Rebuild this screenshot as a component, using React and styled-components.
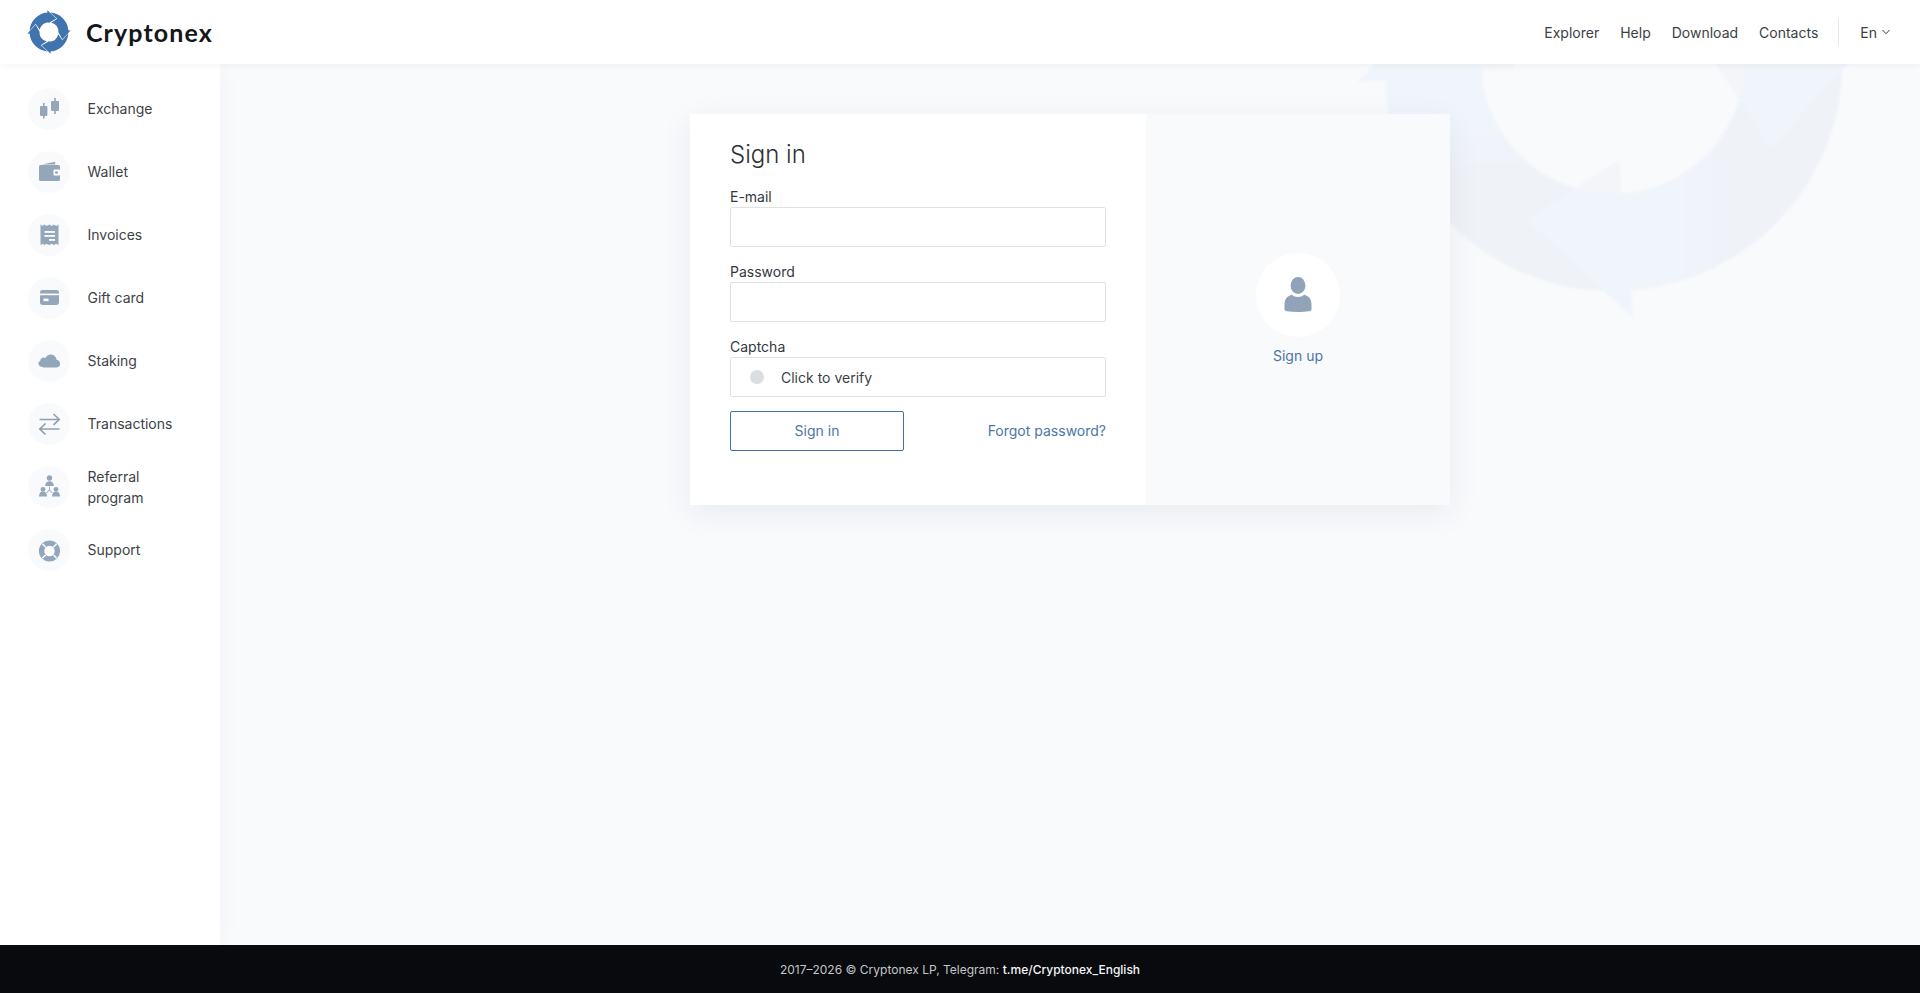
import React from "react";
import styled, { createGlobalStyle } from "styled-components";

const Global = createGlobalStyle`
  html, body { margin: 0; padding: 0; height: 100%; }
  body { font-family: Inter, "Liberation Sans", sans-serif; font-size: 14px; color: #33383e; background: #f8fafc; overflow: hidden; }
  * { box-sizing: border-box; }
  a { text-decoration: none; color: inherit; }
`;

const Page = styled.div`
  display: flex;
  flex-direction: column;
  height: 100vh;
`;
const Header = styled.header`
  position: relative;
  z-index: 3;
  flex: 0 0 64px;
  display: flex;
  align-items: center;
  justify-content: space-between;
  padding: 0 29px 0 26px;
  background: #fff;
  box-shadow: 0 0 8px rgba(40, 50, 70, 0.07);
`;
const Brand = styled.a`
  display: flex;
  align-items: center;
  gap: 14px;
`;
const BrandName = styled.span`
  font-family: "Lato", sans-serif;
  font-weight: 700;
  font-size: 25px;
  letter-spacing: 1.1px;
  color: #14161a;
`;
const TopNav = styled.nav`
  display: flex;
  align-items: center;
`;
const TopLink = styled.a`
  margin-right: 21px;
  line-height: 21px;
  color: #3a3f45;
`;
const Divider = styled.span`
  width: 1px;
  height: 28px;
  margin: 0 21px 0 -1px;
  background: #e4e6e9;
`;
const Lang = styled.span`
  display: flex;
  align-items: center;
  gap: 4px;
  color: #3a3f45;
`;
const Body = styled.div`
  flex: 1;
  display: flex;
  min-height: 0;
`;
const Sidebar = styled.aside`
  position: relative;
  z-index: 2;
  flex: 0 0 220px;
  display: flex;
  flex-direction: column;
  gap: 21px;
  padding: 24px 0 0 28px;
  background: #fff;
  box-shadow: 0 0 22px rgba(40, 60, 90, 0.035);
`;
const NavItem = styled.a`
  display: flex;
  align-items: center;
  gap: 17.5px;
  min-height: 42px;
  line-height: 21px;
  color: #3d4248;
`;
const NavIcon = styled.span`
  flex: 0 0 42px;
  width: 42px;
  height: 42px;
  border-radius: 50%;
  background: #f8fafc;
  svg { display: block; }
`;
const NavLabel = styled.span`
  max-width: 80px;
  position: relative;
  top: -0.5px;
`;
const Main = styled.main`
  position: relative;
  flex: 1;
  display: flex;
  justify-content: center;
  align-items: flex-start;
  padding-top: 50px;
  overflow: hidden;
  background: #f8fafc;
`;
const Watermark = styled.svg`
  position: absolute;
  left: 1123px;
  top: -272px;
  width: 540px;
  height: 540px;
  filter: blur(1px);
`;
const Card = styled.section`
  position: relative;
  display: flex;
  width: 760px;
  background: #fff;
  box-shadow: 0 8px 30px rgba(45, 60, 85, 0.07);
`;
const FormPane = styled.form`
  flex: 0 0 456px;
  padding: 26px 40px 54px 40px;
`;
const Title = styled.h1`
  margin: 0 0 17px;
  font-size: 24px;
  font-weight: 300;
  line-height: 29px;
  color: #2c3136;
`;
const Label = styled.div`
  line-height: 21px;
  color: #33383e;
`;
const Field = styled.input`
  display: block;
  width: 100%;
  height: 40px;
  margin-bottom: 14px;
  border: 1px solid #dfe2e5;
  border-radius: 2px;
  background: #fff;
`;
const Captcha = styled.div`
  display: flex;
  align-items: center;
  gap: 17px;
  height: 40px;
  margin-bottom: 14px;
  padding-left: 19px;
  border: 1px solid #dfe2e5;
  border-radius: 2px;
  color: #3a3f45;
`;
const CaptchaDot = styled.span`
  width: 14px;
  height: 14px;
  border-radius: 50%;
  background: #dadee2;
`;
const Actions = styled.div`
  display: flex;
  align-items: center;
  justify-content: space-between;
`;
const SubmitButton = styled.button`
  width: 174px;
  height: 40px;
  padding: 0 0 1px;
  border: 1px solid #3f6fa6;
  border-radius: 2px;
  background: #fff;
  font: inherit;
  color: #4a76a8;
`;
const BlueLink = styled.a`
  color: #4a76a8;
`;
const ForgotLink = styled(BlueLink)`
  margin-top: -1px;
`;
const SidePane = styled.div`
  flex: 1;
  display: flex;
  flex-direction: column;
  align-items: center;
  justify-content: center;
  gap: 10px;
  padding-bottom: 3px;
  background: #f8fafc;
`;
const Avatar = styled.span`
  display: flex;
  align-items: center;
  justify-content: center;
  width: 84px;
  height: 84px;
  border-radius: 50%;
  background: #fff;
`;
const Footer = styled.footer`
  position: relative;
  z-index: 3;
  flex: 0 0 48px;
  display: flex;
  align-items: center;
  justify-content: center;
  background: #080a0e;
  color: #c4c6c9;
  font-size: 12px;
`;
const FooterLink = styled.a`
  margin-left: 3.5px;
  color: #f4f5f6;
  font-weight: 500;
`;

const ICON = "#94a6ba";

const Exchange = () => (
  <svg width="42" height="42" viewBox="0 0 42 42" fill={ICON}>
    <rect x="12" y="18" width="7.4" height="10" rx="1" />
    <rect x="15" y="15" width="1.6" height="15.5" />
    <rect x="23" y="13" width="8" height="10" rx="1" />
    <rect x="26.2" y="10" width="1.6" height="16" />
  </svg>
);
const Wallet = () => (
  <svg width="42" height="42" viewBox="0 0 42 42">
    <path fill={ICON} d="M12.5 14h18A1.5 1.5 0 0 1 32 15.5V28.5A1.5 1.5 0 0 1 30.5 30H12.5A1.5 1.5 0 0 1 11 28.5V15.5A1.5 1.5 0 0 1 12.5 14Z" />
    <path fill={ICON} d="M14 13.4 27.2 10.8V13.4Z" />
    <rect x="25.5" y="18.5" width="6.5" height="6" rx="1" fill="#fff" />
    <rect x="27" y="20.2" width="3" height="2.6" rx="1" fill={ICON} />
  </svg>
);
const Invoice = () => (
  <svg width="42" height="42" viewBox="0 0 42 42">
    <path fill={ICON} d="M12.5 10.5l2 1.4 2-1.4 2 1.4 2.8-1.4 2.5 1.4 2-1.4 2.5 1.4 2.2-1.4V31l-2.2-1.3-2.5 1.3-2-1.3-2.5 1.3-2.8-1.3-2 1.3-2-1.3-2 1.3Z" />
    <rect x="16.5" y="17" width="10.5" height="1.8" fill="#fff" />
    <rect x="16.5" y="21" width="10.5" height="1.8" fill="#fff" />
    <rect x="21" y="25" width="6" height="1.8" fill="#fff" />
  </svg>
);
const Gift = () => (
  <svg width="42" height="42" viewBox="0 0 42 42">
    <rect x="12" y="13" width="19" height="15" rx="2.4" fill={ICON} />
    <rect x="12" y="16.6" width="19" height="1.6" fill="#fff" />
    <rect x="15.5" y="21.6" width="5" height="2.6" fill="#fff" />
  </svg>
);
const Cloud = () => (
  <svg width="42" height="42" viewBox="0 0 42 42">
    <path fill={ICON} d="M15 27.5h13.5a3.8 3.8 0 0 0 3.6-3.9c0-2.1-1.5-3.7-3.5-3.9-.5-3.1-2.9-5.2-5.8-5.2-2.4 0-4.4 1.4-5.4 3.5-.7-.4-1.4-.6-2.1-.5-1.9.2-3.1 1.8-3 3.5-1.8.6-1.8 1.5-1.8 2.6 0 2.4 2 3.4 4.500 3.400Z" />
  </svg>
);
const Swap = () => (
  <svg width="42" height="42" viewBox="0 0 42 42" fill="none" stroke="#939fae" strokeWidth="1.7">
    <path d="M11.500 17H31M25.500 11.500 31.200 17 25.500 22.300" transform="translate(0 -0.500)" />
    <path d="M31.500 25.500H12M17.500 20 11.800 25.500 17.500 31" transform="translate(0 0.500)" />
  </svg>
);
const Referral = () => (
  <svg width="42" height="42" viewBox="0 0 42 42" fill={ICON}>
    <circle cx="21.5" cy="12" r="2.700" />
    <path d="M17.200 20c0-3 1.900-4.700 4.300-4.700s4.300 1.700 4.300 4.700Z" />
    <circle cx="15" cy="23.300" r="2.400" />
    <path d="M11 30.500c0-3 1.700-4.900 4-4.900s4 1.900 4 4.900Z" />
    <circle cx="28" cy="23.300" r="2.400" />
    <path d="M24 30.500c0-3 1.700-4.900 4-4.900s4 1.900 4 4.900Z" />
    <path d="M21.100 20.500h.8v3.200l2.700 2.700-.6.6-2.500-2.500-2.500 2.500-.6-.6 2.700-2.700Z" />
  </svg>
);
const Lifebuoy = () => (
  <svg width="42" height="42" viewBox="0 0 42 42">
    <circle cx="21.500" cy="22" r="5.200" fill="#fff" />
    <circle cx="21.500" cy="22" r="7.900" fill="none" stroke={ICON} strokeWidth="5.400" />
    <path d="M14.400 14.900 17.800 18.300M28.600 14.900 25.200 18.300M14.400 29.100 17.800 25.700M28.600 29.100 25.200 25.700" stroke="#f8fafc" strokeWidth="1.500" />
  </svg>
);
const User = () => (
  <svg width="28" height="36" viewBox="0 0 28 36" fill="#91a3b8">
    <ellipse cx="14" cy="8.500" rx="7.400" ry="8.500" />
    <path d="M8 17.800c1.500 1.500 3.800 2.200 6 2.200s4.500-.7 6-2.200c4.500 1 7.300 4 7.500 9.500v4.600c0 1.300-1 2.100-2.300 2.300-6.800.9-15.600.9-22.400 0C1.500 34 .5 33.200.5 31.900v-4.600C.7 21.800 3.500 18.800 8 17.800Z" />
  </svg>
);
const Chevron = () => (
  <svg width="10" height="6" viewBox="0 0 10 6" fill="none" stroke="#33383e" strokeWidth="1">
    <path d="M1.500 1 5 4.700 8.500 1" />
  </svg>
);

const ANGLES = [0, 90, 180, 270];
const WM_ARROW = "M6 98 L-87 158 L20 255 L18 228 A229 229 0 0 0 228 22 L156 101 L118 58 A132 132 0 0 1 9 132 Z";
const LOGO_ARROW = "M6 106 L-87 158 L20 255 L18 228 A229 229 0 0 0 228 16 L157 97 L108 26 A113 113 0 0 1 8 113 Z";
const WM_RING = "M0 -229A229 229 0 1 1 0 229A229 229 0 1 1 0 -229ZM0 -132A132 132 0 1 0 0 132A132 132 0 1 0 0 -132Z";

const Logo = () => (
  <svg width="46" height="46" viewBox="-270 -270 540 540" fill="#3f74ae">
    {ANGLES.map((a) => (
      <path key={a} d={LOGO_ARROW} transform={`rotate(${a})`} />
    ))}
  </svg>
);

const Background = () => (
  <Watermark viewBox="-270 -270 540 540">
    <defs>
      <linearGradient id="wmFade" gradientUnits="userSpaceOnUse" x1="50" y1="0" x2="150" y2="0">
        <stop offset="0" stopColor="#f0f5fc" />
        <stop offset="0.35" stopColor="#f0f4fa" />
        <stop offset="1" stopColor="#eff2f6" />
      </linearGradient>
      <clipPath id="wmClip">
        <path d="M0 -270A270 270 0 1 1 0 270A270 270 0 1 1 0 -270ZM0 -132A132 132 0 1 0 0 132A132 132 0 1 0 0 -132Z" clipRule="evenodd" />
      </clipPath>
    </defs>
    {ANGLES.map((a) => (
      <path key={a} d={WM_ARROW} fill="#f3f5f8" transform={`rotate(${a})`} />
    ))}
    <path d={WM_RING} fill="#eff2f6" fillRule="evenodd" />
    <g clipPath="url(#wmClip)">
      {ANGLES.map((a) => (
        <path key={a} d={WM_ARROW} fill="url(#wmFade)" transform={`rotate(${a})`} />
      ))}
    </g>
  </Watermark>
);

const NAV = [
  ["Exchange", Exchange],
  ["Wallet", Wallet],
  ["Invoices", Invoice],
  ["Gift card", Gift],
  ["Staking", Cloud],
  ["Transactions", Swap],
  ["Referral program", Referral],
  ["Support", Lifebuoy],
];

export default function App() {
  return (
    <Page>
      <Global />
      <Header>
        <Brand href="#">
          <Logo />
          <BrandName>Cryptonex</BrandName>
        </Brand>
        <TopNav>
          <TopLink href="#">Explorer</TopLink>
          <TopLink href="#">Help</TopLink>
          <TopLink href="#">Download</TopLink>
          <TopLink href="#">Contacts</TopLink>
          <Divider />
          <Lang>
            En <Chevron />
          </Lang>
        </TopNav>
      </Header>
      <Body>
        <Sidebar>
          {NAV.map(([label, Icon]) => (
            <NavItem href="#" key={label}>
              <NavIcon>
                <Icon />
              </NavIcon>
              <NavLabel>{label}</NavLabel>
            </NavItem>
          ))}
        </Sidebar>
        <Main>
          <Background />
          <Card>
            <FormPane onSubmit={(e) => e.preventDefault()}>
              <Title>Sign in</Title>
              <Label>E-mail</Label>
              <Field type="text" />
              <Label>Password</Label>
              <Field type="password" />
              <Label>Captcha</Label>
              <Captcha>
                <CaptchaDot />
                Click to verify
              </Captcha>
              <Actions>
                <SubmitButton type="submit">Sign in</SubmitButton>
                <ForgotLink href="#">Forgot password?</ForgotLink>
              </Actions>
            </FormPane>
            <SidePane>
              <Avatar>
                <User />
              </Avatar>
              <BlueLink href="#">Sign up</BlueLink>
            </SidePane>
          </Card>
        </Main>
      </Body>
      <Footer>
        2017–2026 © Cryptonex LP, Telegram: <FooterLink href="#">t.me/Cryptonex_English</FooterLink>
      </Footer>
    </Page>
  );
}
